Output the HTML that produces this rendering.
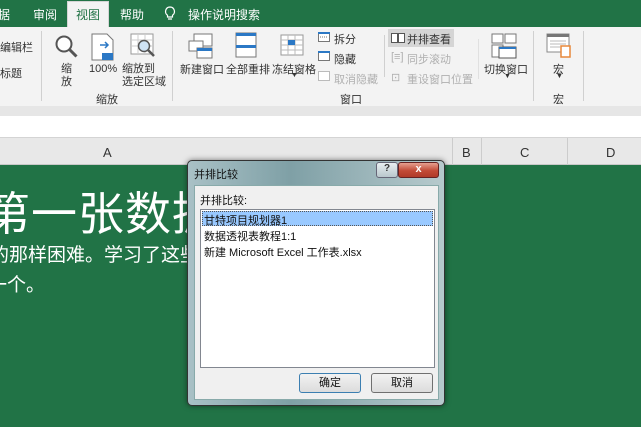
<!DOCTYPE html>
<html><head><meta charset="utf-8"><style>
*{margin:0;padding:0;box-sizing:border-box}
body{width:641px;height:427px;overflow:hidden;position:relative;background:#217346;font-family:"Liberation Sans","Noto Sans CJK SC",sans-serif;font-size:11px;color:#333}
.abs{position:absolute}
.tabbar{left:0;top:0;width:641px;height:27px;background:#217346;color:#fff;font-size:12px}
.tab{position:absolute;top:6px}
.ribbon{left:0;top:27px;width:641px;height:79px;background:#f3f3f3}
.strip{left:0;top:106px;width:641px;height:10px;background:#e6e6e6}
.fbar{left:0;top:116px;width:641px;height:22px;background:#fff;border-bottom:1px solid #d4d4d4}
.colh{left:0;top:138px;width:641px;height:27px;background:#e8e8e8;border-bottom:1px solid #c8c8c8;font-size:13px;color:#333}
.sep{position:absolute;width:1px;background:#d0d0d0}
.lbl{position:absolute;font-size:11px;color:#333;white-space:nowrap}
.dis{color:#b0b0b0}
.big{left:-16px;top:178px;color:#fff;font-size:46px;font-family:"Noto Sans CJK SC",sans-serif;white-space:nowrap;letter-spacing:1px}
.mid{color:#fff;font-size:19px;font-family:"Noto Sans CJK SC",sans-serif;white-space:nowrap}
</style></head><body>
<div class="abs tabbar">
<span class="tab" style="left:-2px">据</span>
<span class="tab" style="left:33px">审阅</span>
<div class="abs" style="left:67px;top:1px;width:42px;height:26px;background:#f3f3f3;border:1px solid #d5d5d5;border-bottom:none"></div>
<span class="tab" style="left:76px;color:#217346">视图</span>
<span class="tab" style="left:120px">帮助</span>
<svg class="abs" style="left:164px;top:6px" width="12" height="15"><path d="M6 1a4.5 4.5 0 0 0-2.5 8.2V11h5V9.2A4.5 4.5 0 0 0 6 1zM4 13h4" stroke="#fff" fill="none" stroke-width="1.2"/></svg>
<span class="tab" style="left:188px">操作说明搜索</span>
</div>
<div class="abs ribbon">
<span class="lbl" style="left:0;top:12px">编辑栏</span>
<span class="lbl" style="left:0;top:38px">标题</span>
<div class="sep" style="left:41px;top:4px;height:70px"></div>
<svg class="abs" style="left:54px;top:7px" width="26" height="26"><circle cx="10" cy="10" r="7.5" stroke="#555" stroke-width="2" fill="#fff"/><path d="M15.5 15.5l7 7" stroke="#555" stroke-width="3"/></svg>
<span class="lbl" style="left:61px;top:36px;line-height:13px">缩<br>放</span>
<svg class="abs" style="left:91px;top:6px" width="24" height="28"><path d="M1 1h15l6 6v20H1z" fill="#fff" stroke="#777"/><path d="M9 12h8M14 9l3 3-3 3" stroke="#2b78c5" stroke-width="1.5" fill="none"/><rect x="11" y="20" width="11" height="7" fill="#2b78c5"/></svg>
<span class="lbl" style="left:89px;top:36px">100%</span>
<svg class="abs" style="left:130px;top:6px" width="28" height="26"><rect x="1" y="1" width="22" height="20" fill="#fff" stroke="#999"/><path d="M1 7h22M1 13h22M8 1v20M15 1v20" stroke="#ccc"/><circle cx="14" cy="13" r="5.5" fill="#cfe3f5" stroke="#555" stroke-width="1.5"/><path d="M18 17l6 6" stroke="#555" stroke-width="2.5"/></svg>
<span class="lbl" style="left:122px;top:36px;line-height:13px">缩放到<br>选定区域</span>
<span class="lbl" style="left:96px;top:64px">缩放</span>
<div class="sep" style="left:172px;top:4px;height:70px"></div>
<svg class="abs" style="left:188px;top:6px" width="26" height="26"><rect x="6" y="1" width="18" height="12" fill="#fff" stroke="#777"/><rect x="1" y="8" width="14" height="10" fill="#fff" stroke="#777"/><rect x="9" y="15" width="15" height="10" fill="#fff" stroke="#777"/><rect x="9" y="15" width="15" height="3" fill="#2b78c5"/></svg>
<span class="lbl" style="left:180px;top:34px">新建窗口</span>
<svg class="abs" style="left:235px;top:5px" width="22" height="26"><rect x="1" y="1" width="20" height="24" fill="#fff" stroke="#777"/><rect x="1" y="1" width="20" height="3" fill="#2b78c5"/><rect x="1" y="13" width="20" height="3" fill="#2b78c5"/></svg>
<span class="lbl" style="left:226px;top:34px">全部重排</span>
<svg class="abs" style="left:280px;top:7px" width="24" height="22"><rect x="1" y="1" width="22" height="20" fill="#fff" stroke="#999"/><path d="M1 6h22M1 11h22M1 16h22M8 1v20M15 1v20" stroke="#bbb"/><rect x="8" y="6" width="7" height="5" fill="#2b78c5"/></svg>
<span class="lbl" style="left:272px;top:34px">冻结窗格</span>
<span class="lbl" style="left:291px;top:45px;font-size:7px">▼</span>
<svg class="abs" style="left:318px;top:5px" width="12" height="10"><rect x=".5" y=".5" width="11" height="9" fill="#fff" stroke="#777"/><path d="M0 1h12" stroke="#2b78c5" stroke-width="2"/><path d="M2 5h8" stroke="#777" stroke-dasharray="1 1"/></svg>
<span class="lbl" style="left:334px;top:4px">拆分</span>
<svg class="abs" style="left:318px;top:24px" width="12" height="10"><rect x=".5" y=".5" width="11" height="9" fill="#fff" stroke="#777"/><path d="M0 1h12" stroke="#2b78c5" stroke-width="2"/></svg>
<span class="lbl" style="left:334px;top:24px">隐藏</span>
<svg class="abs" style="left:318px;top:44px" width="12" height="10"><rect x=".5" y=".5" width="11" height="9" fill="#fff" stroke="#bbb"/></svg>
<span class="lbl dis" style="left:334px;top:44px">取消隐藏</span>
<div class="sep" style="left:384px;top:8px;height:42px"></div>
<div class="abs" style="left:388px;top:2px;width:66px;height:18px;background:#d5d5d5"></div>
<svg class="abs" style="left:391px;top:6px" width="14" height="10"><rect x=".5" y=".5" width="6" height="9" fill="#fff" stroke="#555"/><rect x="7.5" y=".5" width="6" height="9" fill="#fff" stroke="#555"/></svg>
<span class="lbl" style="left:407px;top:4px">并排查看</span>
<span class="lbl dis" style="left:391px;top:24px">[≡]</span>
<span class="lbl dis" style="left:407px;top:24px">同步滚动</span>
<span class="lbl dis" style="left:391px;top:44px">⊡</span>
<span class="lbl dis" style="left:407px;top:44px">重设窗口位置</span>
<span class="lbl" style="left:340px;top:64px">窗口</span>
<div class="sep" style="left:478px;top:12px;height:40px;background:#e0e0e0"></div>
<svg class="abs" style="left:491px;top:6px" width="26" height="26"><rect x="1" y="1" width="11" height="9" fill="#fff" stroke="#777"/><rect x="14" y="1" width="11" height="9" fill="#fff" stroke="#777"/><rect x="1" y="12" width="11" height="12" fill="#fff" stroke="#777"/><rect x="8" y="14" width="17" height="11" fill="#fff" stroke="#555"/><rect x="8" y="14" width="17" height="2" fill="#2b78c5"/></svg>
<span class="lbl" style="left:484px;top:34px">切换窗口</span>
<span class="lbl" style="left:504px;top:46px;font-size:7px">▼</span>
<div class="sep" style="left:533px;top:4px;height:70px"></div>
<svg class="abs" style="left:546px;top:6px" width="28" height="26"><rect x="1" y="1" width="22" height="18" fill="#fff" stroke="#888"/><rect x="1" y="1" width="22" height="3" fill="#777"/><path d="M4 8h16M4 11h16M4 14h10" stroke="#bbb"/><path d="M15 13h9v11h-9z" fill="#fff" stroke="#e8883a" stroke-width="1.5"/></svg>
<span class="lbl" style="left:553px;top:34px">宏</span>
<span class="lbl" style="left:556px;top:46px;font-size:7px">▼</span>
<span class="lbl" style="left:553px;top:64px">宏</span>
<div class="sep" style="left:583px;top:4px;height:70px"></div>
</div>
<div class="abs strip"></div>
<div class="abs fbar"></div>
<div class="abs colh">
<span class="abs" style="left:103px;top:7px">A</span>
<div class="sep" style="left:452px;top:0;height:27px;background:#ccc"></div>
<span class="abs" style="left:462px;top:7px">B</span>
<div class="sep" style="left:481px;top:0;height:27px;background:#ccc"></div>
<span class="abs" style="left:520px;top:7px">C</span>
<div class="sep" style="left:567px;top:0;height:27px;background:#ccc"></div>
<span class="abs" style="left:606px;top:7px">D</span>
</div>
<div class="abs big">第一张数据</div>
<div class="abs mid" style="left:-10px;top:240px">的那样困难。学习了这些</div>
<div class="abs mid" style="left:-12px;top:270px">一个。</div>
<!-- dialog -->
<div class="abs" style="left:187px;top:160px;width:258px;height:246px;border:1px solid #333;border-radius:5px;background:linear-gradient(90deg,#a9c1c6,#7fa0a6 40%,#b7cacd);box-shadow:0 0 6px rgba(0,0,0,.5)">
<span class="abs" style="left:6px;top:5px;font-size:11px;color:#111">并排比较</span>
<div class="abs" style="left:188px;top:1px;width:22px;height:16px;border:1px solid #667;border-radius:3px;background:linear-gradient(#e8eef0,#b9c7cc);text-align:center;font-size:10px;font-weight:bold;color:#333">?</div>
<div class="abs" style="left:210px;top:1px;width:41px;height:16px;border:1px solid #622;border-radius:3px;background:linear-gradient(#e6a090,#c24a36 55%,#b03a28);text-align:center;font-size:11px;font-weight:bold;color:#fff">x</div>
<div class="abs" style="left:6px;top:24px;width:245px;height:215px;background:#f0f0f0;border:1px solid #8aa">
<span class="abs" style="left:5px;top:6px;font-size:11px;color:#111">并排比较:</span>
<div class="abs" style="left:5px;top:23px;width:235px;height:159px;background:#fff;border:1px solid #828790">
<div class="abs" style="left:1px;top:1px;width:231px;height:15px;background:#99c9ff;border:1px dotted #555"></div>
<span class="abs" style="left:3px;top:2px;font-size:11px;color:#111">甘特项目规划器1</span>
<span class="abs" style="left:3px;top:18px;font-size:11px;color:#111">数据透视表教程1:1</span>
<span class="abs" style="left:3px;top:34px;font-size:11px;color:#111">新建 Microsoft Excel 工作表.xlsx</span>
</div>
<div class="abs" style="left:104px;top:187px;width:62px;height:20px;border:1px solid #3c7fb1;border-radius:3px;background:linear-gradient(#f2f2f2,#dcdcdc);text-align:center;line-height:18px;font-size:11px;color:#111">确定</div>
<div class="abs" style="left:176px;top:187px;width:62px;height:20px;border:1px solid #707070;border-radius:3px;background:linear-gradient(#f2f2f2,#dcdcdc);text-align:center;line-height:18px;font-size:11px;color:#111">取消</div>
</div>
</div>
</body></html>
